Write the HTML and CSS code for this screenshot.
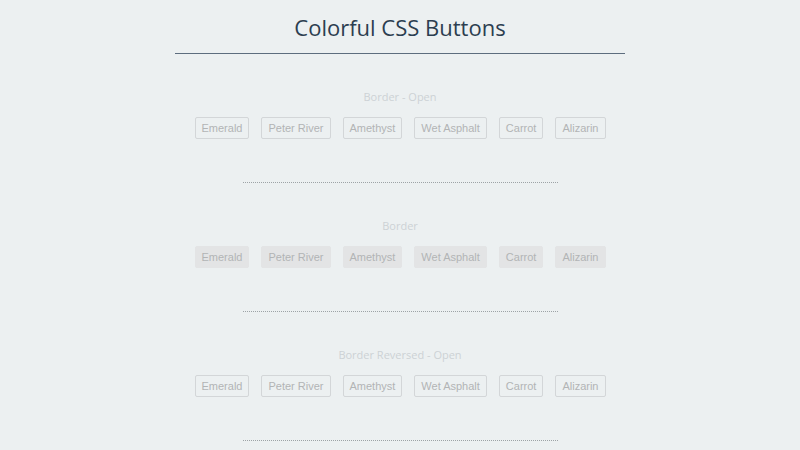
FILE: index.html
```html
<!DOCTYPE html>
<html lang="en">
<head>
  <meta charset="UTF-8" />
  <title>Colorful CSS Buttons</title>
  <link rel="stylesheet" href="styles.css">
</head>
<body>

<div id="page">
  <h1>Colorful CSS Buttons</h1>

  <div class="section">
    <h2>Border - Open</h2>
    <div class="buttons">
      <button class="btn open">Emerald</button>
      <button class="btn open">Peter River</button>
      <button class="btn open">Amethyst</button>
      <button class="btn open">Wet Asphalt</button>
      <button class="btn open">Carrot</button>
      <button class="btn open">Alizarin</button>
    </div>
    <div class="divider"></div>
  </div>

  <div class="section">
    <h2>Border</h2>
    <div class="buttons">
      <button class="btn filled">Emerald</button>
      <button class="btn filled">Peter River</button>
      <button class="btn filled">Amethyst</button>
      <button class="btn filled">Wet Asphalt</button>
      <button class="btn filled">Carrot</button>
      <button class="btn filled">Alizarin</button>
    </div>
    <div class="divider"></div>
  </div>

  <div class="section">
    <h2>Border Reversed - Open</h2>
    <div class="buttons">
      <button class="btn open">Emerald</button>
      <button class="btn open">Peter River</button>
      <button class="btn open">Amethyst</button>
      <button class="btn open">Wet Asphalt</button>
      <button class="btn open">Carrot</button>
      <button class="btn open">Alizarin</button>
    </div>
    <div class="divider"></div>
  </div>
</div>

</body>
</html>
```

FILE: styles.css
```css
body {
  margin: 0;
  padding: 0;
  background-color: #ecf0f1;
  font-family: "Open Sans", sans-serif;
}

#page {
  width: 450px;
  margin: 0 auto;
  text-align: center;
}

h1 {
  margin: 0;
  padding: 9px 0 8px;
  font-size: 22px;
  line-height: 36px;
  font-weight: 400;
  color: #2c3e50;
  border-bottom: 1px solid #5d6d7e;
}

.section {
  padding-top: 34px;
}

h2 {
  margin: 0 0 11px;
  font-size: 11px;
  line-height: 18px;
  font-weight: 400;
  color: #cdd2d5;
}

.buttons {
  display: flex;
  justify-content: center;
  gap: 12px;
}

.btn {
  height: 22px;
  padding: 0 6px;
  font-family: "Liberation Sans", Arial, sans-serif;
  font-size: 11px;
  color: #b2b4b5;
  border-radius: 2px;
  cursor: pointer;
}

.btn.open {
  background: transparent;
  border: 1px solid #d3d6d8;
}

.btn.filled {
  background: #e3e4e5;
  border: 1px solid #e3e4e5;
}

.divider {
  width: 315px;
  margin: 43px auto 0;
  border-top: 1px dotted #9da3a6;
}
```
